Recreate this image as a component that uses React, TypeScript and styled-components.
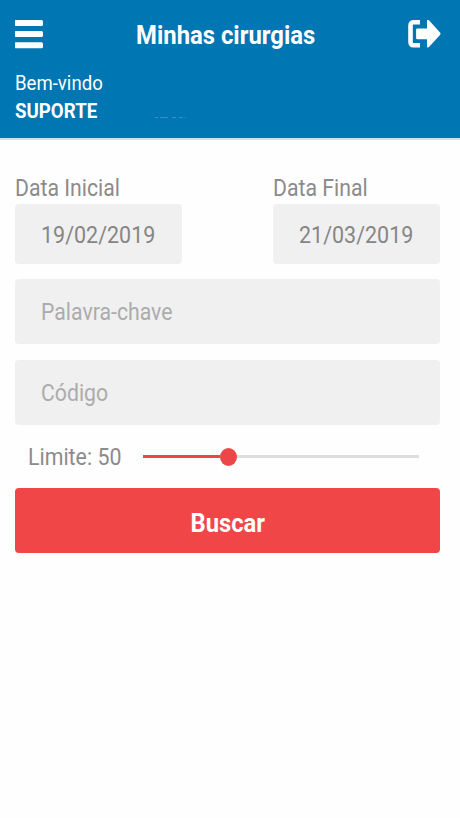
import React, { useState } from "react";
import styled, { createGlobalStyle } from "styled-components";

const GlobalStyle = createGlobalStyle`
  *, *::before, *::after { box-sizing: border-box; }
  body { margin: 0; background: #fefefe; font-family: Roboto, sans-serif; }
  button, input { font-family: inherit; }
`;

const Screen = styled.div`
  width: 460px;
  min-height: 818px;
  background: #fefefe;
  overflow: hidden;
`;

const Header = styled.header`
  height: 140px;
  padding: 15px 15px 0;
  background: #0076b3;
  border-bottom: 2px solid #c9e2f5;
  color: #fff;
`;

const TitleBar = styled.div`
  display: grid;
  grid-template-columns: 35px 1fr 44px;
  align-items: center;
  height: 40px;
`;

const IconButton = styled.button<{ $end?: boolean }>`
  display: flex;
  justify-content: ${(p) => (p.$end ? "flex-end" : "flex-start")};
  padding: ${(p) => (p.$end ? "0 4px 0 0" : "0")};
  border: 0;
  background: none;
  color: inherit;
`;

/* Roboto narrowed horizontally to the app's condensed proportions. */
const Label = styled.span<{ $scale?: number; $center?: boolean }>`
  display: block;
  width: max-content;
  white-space: nowrap;
  transform: scaleX(${(p) => p.$scale ?? 0.885});
  transform-origin: ${(p) => (p.$center ? "center" : "left")};
`;

const Title = styled.h1`
  display: flex;
  justify-content: center;
  margin: 0;
  font-size: 26px;
  font-weight: 700;
  line-height: 40px;
`;

const Welcome = styled.div`
  padding-top: 14px;
  font-size: 21px;
  line-height: 28px;
`;

const UserName = styled.div`
  display: flex;
  align-items: flex-end;
  font-weight: 700;
`;

const NameTrace = styled.svg`
  margin: 0 0 6px 47px;
`;

const Form = styled.form`
  display: flex;
  flex-direction: column;
  padding: 34px 20px 0 15px;
  color: #8b8b8b;
  font-size: 24px;
`;

const DateRow = styled.div`
  display: flex;
  justify-content: space-between;
  margin-bottom: 15px;
`;

const DateGroup = styled.div`
  width: 167px;
`;

const DateCaption = styled.div`
  height: 30px;
  line-height: 29px;
`;

const DateField = styled.div`
  height: 59.5px;
  padding-left: 26px;
  border-radius: 4px;
  background: #f0f0f0;
  color: #868686;
  line-height: 62px;
`;

const TextField = styled.div`
  height: 65.5px;
  margin-bottom: 15.5px;
  padding-left: 26px;
  border-radius: 4px;
  background: #f0f0f0;
  color: #acacac;
  line-height: 67px;
`;

const LimitRow = styled.div`
  display: flex;
  align-items: center;
  height: 34px;
  margin: -1px 21px 14px 13px;
`;

const LimitCaption = styled.div`
  width: 115px;
`;

const Track = styled.div`
  display: flex;
  align-items: center;
  flex: 1;
  height: 18px;
`;

const Filled = styled.div`
  width: 77px;
  height: 3px;
  background: #e9474b;
`;

const Thumb = styled.div`
  width: 17px;
  height: 18px;
  border-radius: 50%;
  background: #ee4549;
`;

const Remaining = styled.div`
  flex: 1;
  height: 3px;
  background: #dedede;
`;

const Submit = styled.button`
  display: flex;
  justify-content: center;
  align-items: center;
  height: 65.5px;
  padding: 5px 0 0;
  border: 0;
  border-radius: 4px;
  background: #f14647;
  color: #fff;
  font-size: 26px;
  font-weight: 700;
`;

const MenuIcon = () => (
  <svg width="29" height="30" viewBox="0 0 29 30" fill="currentColor">
    <rect x="-0.5" y="0" width="28.5" height="6" rx="1.5" />
    <rect x="-0.5" y="11" width="28.5" height="6" rx="1.5" />
    <rect x="-0.5" y="22.2" width="28.5" height="6" rx="1.5" />
  </svg>
);

const ExitIcon = () => (
  <svg width="34" height="30" viewBox="0 0 34 30" fill="none">
    <path d="M13 2.3H6.5C4.1 2.3 3.5 3.7 3.5 6V21.6C3.5 24.2 4.1 25.3 6.5 25.3H13" stroke="currentColor" strokeWidth="4.6" />
    <path d="M10.3 8.6H20V1C20 -.6 21.2 -.5 22.2 .6L33 12.6Q34 13.8 33 15L22.2 26.8C21.2 27.9 20 27.6 20 26.2V19.2H10.3Q9.1 19.2 9.1 18V9.8Q9.1 8.6 10.3 8.6Z" fill="currentColor" />
  </svg>
);

export default function App() {
  const [limit] = useState(50);
  return (
    <Screen>
      <GlobalStyle />
      <Header>
        <TitleBar>
          <IconButton aria-label="Menu"><MenuIcon /></IconButton>
          <Title><Label $center $scale={0.917}>Minhas cirurgias</Label></Title>
          <IconButton $end aria-label="Sair"><ExitIcon /></IconButton>
        </TitleBar>
        <Welcome>
          <Label>Bem-vindo</Label>
          <UserName>
            <Label $scale={0.89}>SUPORTE</Label>
            <NameTrace width="34" height="3" viewBox="0 0 34 3" aria-hidden="true">
              <path d="M1 1.5h3M6 1.5h8M18 1.5h4M25 1.5h4M31 1.5h1" stroke="#4a9dcc" strokeWidth="1" opacity="0.7" />
            </NameTrace>
          </UserName>
        </Welcome>
      </Header>
      <Form>
        <DateRow>
          <DateGroup>
            <DateCaption><Label>Data Inicial</Label></DateCaption>
            <DateField><Label $scale={0.895}>19/02/2019</Label></DateField>
          </DateGroup>
          <DateGroup>
            <DateCaption><Label>Data Final</Label></DateCaption>
            <DateField><Label $scale={0.895}>21/03/2019</Label></DateField>
          </DateGroup>
        </DateRow>
        <TextField><Label>Palavra-chave</Label></TextField>
        <TextField><Label>Código</Label></TextField>
        <LimitRow>
          <LimitCaption><Label $scale={0.89}>Limite: {limit}</Label></LimitCaption>
          <Track><Filled /><Thumb /><Remaining /></Track>
        </LimitRow>
        <Submit type="button"><Label $center $scale={0.915}>Buscar</Label></Submit>
      </Form>
    </Screen>
  );
}
